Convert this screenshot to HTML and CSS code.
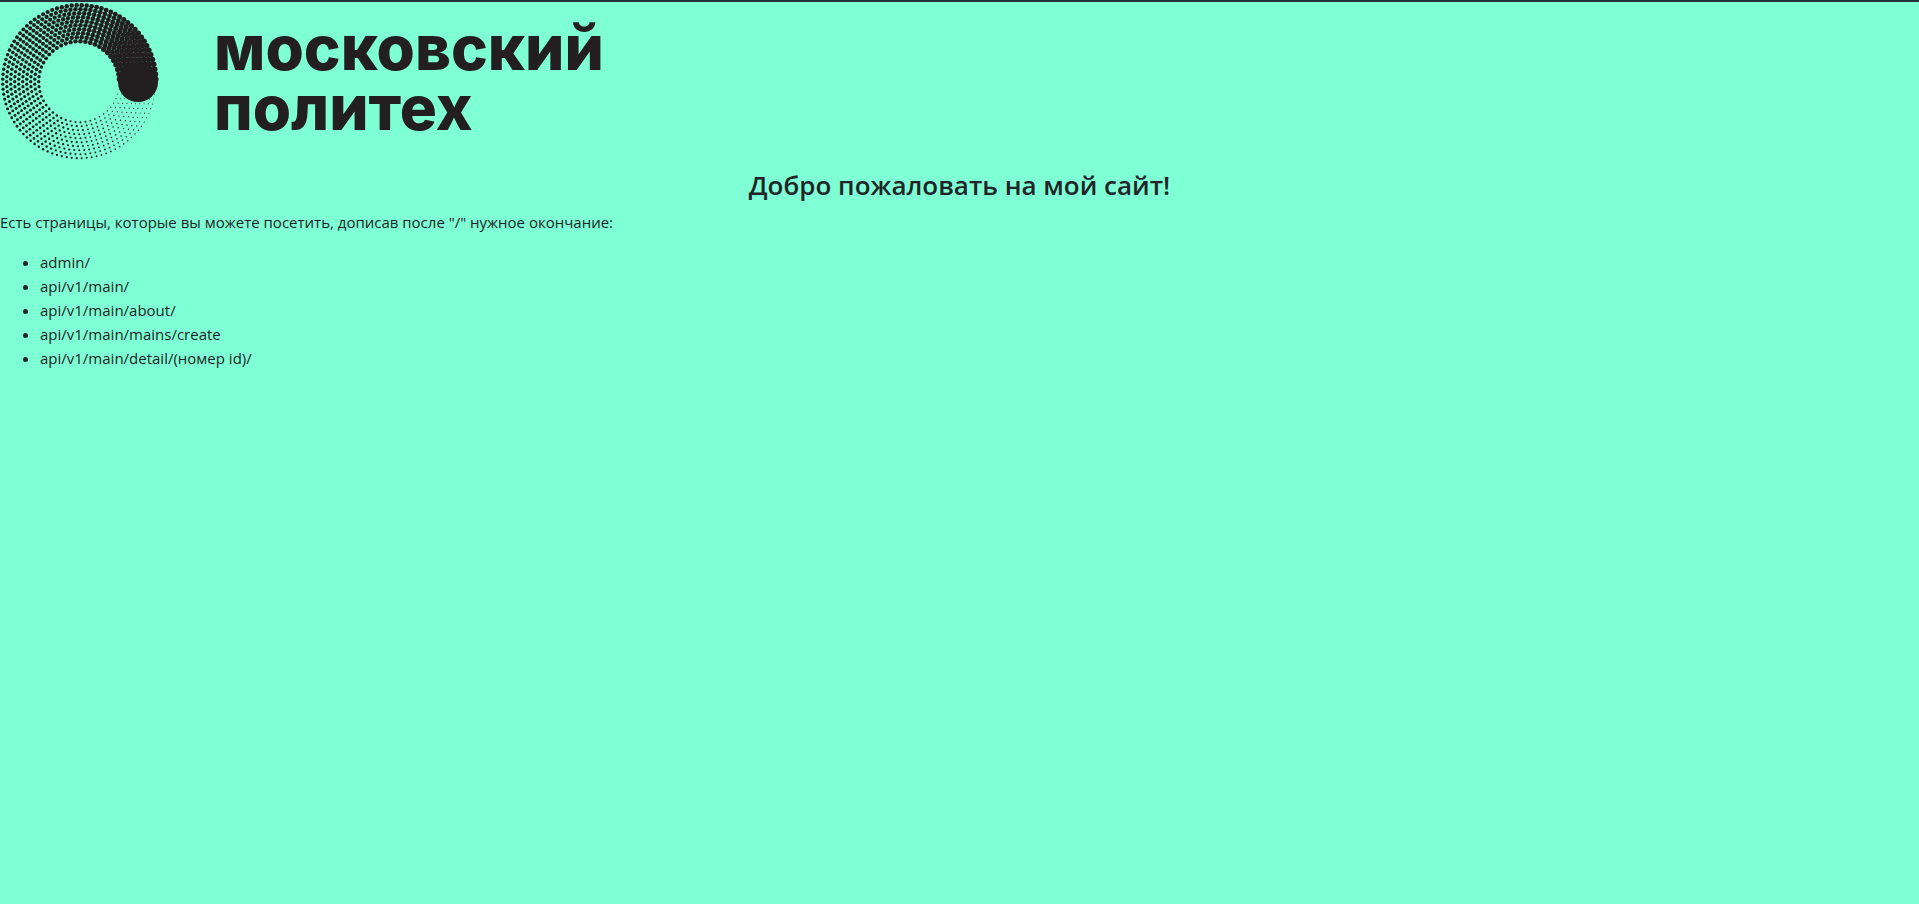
FILE: index.html
```html
<!DOCTYPE html>
<html lang="ru">
<head>
<meta charset="utf-8">
<title>Московский Политех</title>
<link rel="stylesheet" href="styles.css">
</head>
<body>
<header class="logo">
  <svg class="logo-mark" viewBox="0 0 160 164" aria-hidden="true">
    <g id="dots"></g>
    <circle cx="138" cy="80" r="20"/>
  </svg>
  <div class="logo-name">
    <span>московский</span>
    <span>политех</span>
  </div>
</header>
<main>
  <h1 class="title">Добро пожаловать на мой сайт!</h1>
  <p class="intro">Есть страницы, которые вы можете посетить, дописав после "/" нужное окончание:</p>
  <ul class="pages">
    <li>admin/</li>
    <li>api/v1/main/</li>
    <li>api/v1/main/about/</li>
    <li>api/v1/main/mains/create</li>
    <li>api/v1/main/detail/(номер id)/</li>
  </ul>
</main>
<script src="logo.js"></script>
</body>
</html>
```
FILE: styles.css
```css
* {
  box-sizing: border-box;
}

body {
  margin: 0;
  min-height: 100vh;
  border-top: 2px solid #263238;
  background: #7fffd4;
  color: #212529;
  font-family: "Open Sans", "Noto Sans", sans-serif;
  font-size: 15px;
  line-height: 24px;
}

.logo {
  display: flex;
  align-items: flex-start;
  gap: 54px;
  height: 166px;
  color: #231f20;
}

.logo-mark {
  flex: none;
  width: 160px;
  height: 164px;
  fill: currentColor;
}

.logo-name {
  display: flex;
  flex-direction: column;
  padding-top: 16px;
  font-family: Inter, sans-serif;
  font-size: 62px;
  font-weight: 800;
  line-height: 60px;
}

.title {
  margin: 0 0 8px;
  font-size: 26px;
  font-weight: 600;
  line-height: 34px;
  text-align: center;
}

.intro {
  margin: 0 0 16px;
}

.pages {
  margin: 0;
  padding-left: 40px;
}
```
FILE: logo.js
```js
// Ten concentric rings of dots that grow clockwise from the solid disc.
// Neighbouring rings are staggered by half a step, counted from the left side.
const group = document.getElementById("dots");
const cx = 79.2, cy = 79.7;
for (let ring = 0; ring < 10; ring++) {
  const radius = 40.5 + ring * 4;
  const count = Math.round(2 * Math.PI * radius / 5);
  for (let i = 0; i < count; i++) {
    const turn = (0.5 + (i + (ring % 2) / 2) / count) % 1;
    const angle = turn * 2 * Math.PI;
    const dot = document.createElementNS("http://www.w3.org/2000/svg", "circle");
    dot.setAttribute("cx", (cx + radius * Math.cos(angle)).toFixed(2));
    dot.setAttribute("cy", (cy + radius * Math.sin(angle)).toFixed(2));
    dot.setAttribute("r", (0.4 + 2.5 * turn).toFixed(2));
    group.appendChild(dot);
  }
}
```
